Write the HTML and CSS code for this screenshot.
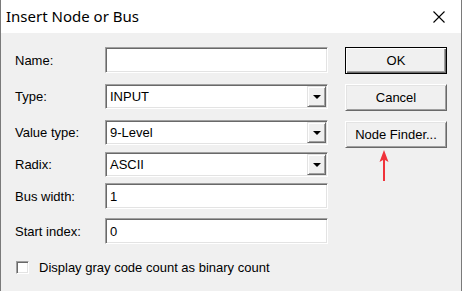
FILE: index.html
```html
<!DOCTYPE html>
<html lang="en">
<head>
    <meta charset="UTF-8">
    <title>Insert Node or Bus</title>
    <link rel="stylesheet" href="styles.css">
</head>
<body>
    <div class="window">
        <div class="titlebar">
            <span class="title">Insert Node or Bus</span>
            <svg class="close" width="12" height="12" viewBox="0 0 12 12">
                <path d="M0.5 0.5 L11.5 11.5 M11.5 0.5 L0.5 11.5" stroke="#000" stroke-width="1.1" fill="none"/>
            </svg>
        </div>

        <div class="client">
            <div class="form">
                <div class="row row-name">
                    <span class="label">Name:</span>
                    <div class="field"></div>
                </div>
                <div class="row row-type">
                    <span class="label">Type:</span>
                    <div class="field combo">INPUT<span class="drop"></span></div>
                </div>
                <div class="row row-value">
                    <span class="label">Value type:</span>
                    <div class="field combo">9-Level<span class="drop"></span></div>
                </div>
                <div class="row row-radix">
                    <span class="label">Radix:</span>
                    <div class="field combo">ASCII<span class="drop"></span></div>
                </div>
                <div class="row row-bus">
                    <span class="label">Bus width:</span>
                    <div class="field">1</div>
                </div>
                <div class="row row-start">
                    <span class="label">Start index:</span>
                    <div class="field">0</div>
                </div>
                <div class="check">
                    <span class="box"></span>
                    <span>Display gray code count as binary count</span>
                </div>
            </div>

            <div class="buttons">
                <button class="btn default">OK</button>
                <button class="btn">Cancel</button>
                <button class="btn">Node Finder...</button>
                <svg class="pointer" width="12" height="31" viewBox="0 0 12 31">
                    <path d="M6 0 L10.5 12 L7 10 L7 31 L5 31 L5 10 L1.5 12 Z" fill="#f0323a"/>
                </svg>
            </div>
        </div>
    </div>
</body>
</html>
```

FILE: styles.css
```css
* {
    margin: 0;
    padding: 0;
    box-sizing: border-box;
}

body {
    font-family: "Liberation Sans", Arial, sans-serif;
    font-size: 13px;
    color: #000;
    background: #fff;
}

.window {
    width: 462px;
    height: 291px;
    border-left: 1px solid #7a7a7a;
    border-right: 1px solid #7a7a7a;
    background: #f0f0f0;
    overflow: hidden;
}

.titlebar {
    height: 33px;
    background: #fff;
    display: flex;
    align-items: center;
    justify-content: space-between;
    padding: 0 15px 0 5px;
}

.title {
    font-family: "Noto Sans", sans-serif;
    font-size: 15px;
    color: #000;
    padding-bottom: 1px;
}

.close {
    display: block;
    margin-right: 1px;
}

.client {
    display: flex;
    padding: 14px 0 0 14px;
}

.form {
    width: 313px;
}

.row {
    display: flex;
    align-items: center;
}

.label {
    width: 90px;
}

.field {
    width: 223px;
    height: 26px;
    background: #fff;
    border-top: 1px solid #a0a0a0;
    border-left: 1px solid #a0a0a0;
    border-right: 1px solid #fff;
    border-bottom: 1px solid #fff;
    box-shadow: inset 1px 1px 0 #696969, inset -1px -1px 0 #e3e3e3;
    padding: 0 0 0 4px;
    line-height: 23px;
    display: flex;
    align-items: center;
    justify-content: space-between;
}

.row-type { margin-top: 11px; height: 25px; }
.row-value { margin-top: 11px; }
.row-radix { margin-top: 7px; }
.row-bus { margin-top: 6px; }
.row-start { margin-top: 9px; }

.row-type .field,
.row-value .field,
.row-radix .field {
    height: 25px;
}

.drop {
    width: 19px;
    height: 21px;
    margin-right: 1px;
    background: #f0f0f0;
    border-top: 1px solid #e3e3e3;
    border-left: 1px solid #e3e3e3;
    border-right: 1px solid #696969;
    border-bottom: 1px solid #696969;
    box-shadow: inset 1px 1px 0 #fff, inset -1px -1px 0 #a0a0a0;
    position: relative;
}

.drop::after {
    content: "";
    position: absolute;
    left: 5px;
    top: 8px;
    border-left: 4px solid transparent;
    border-right: 4px solid transparent;
    border-top: 4px solid #000;
}

.check {
    display: flex;
    align-items: center;
    margin-top: 16px;
    padding-left: 1px;
}

.box {
    width: 13px;
    height: 13px;
    background: #fff;
    border-top: 1px solid #a0a0a0;
    border-left: 1px solid #a0a0a0;
    border-right: 1px solid #fff;
    border-bottom: 1px solid #fff;
    box-shadow: inset 1px 1px 0 #696969, inset -1px -1px 0 #e3e3e3;
    margin-right: 10px;
}

.buttons {
    width: 102px;
    margin-left: 17px;
    display: flex;
    flex-direction: column;
    gap: 10px;
}

.btn {
    font-family: "Liberation Sans", Arial, sans-serif;
    font-size: 13px;
    color: #000;
    height: 27px;
    background: #f0f0f0;
    border-top: 1px solid #fff;
    border-left: 1px solid #fff;
    border-right: 1px solid #696969;
    border-bottom: 1px solid #696969;
    box-shadow: inset 1px 1px 0 #e3e3e3, inset -1px -1px 0 #a0a0a0;
}

.btn.default {
    border: 1px solid #000;
    box-shadow: inset 1px 1px 0 #fff, inset -1px -1px 0 #696969, inset -2px -2px 0 #a0a0a0;
}

.pointer {
    display: block;
    margin: -8px 0 0 33px;
}
```
